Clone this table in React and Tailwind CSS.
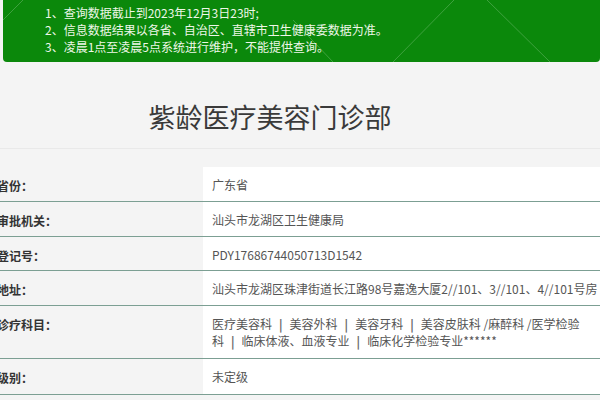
const notices = [
  "1、查询数据截止到2023年12月3日23时;",
  "2、信息数据结果以各省、自治区、直辖市卫生健康委数据为准。",
  "3、凌晨1点至凌晨5点系统进行维护，不能提供查询。",
];

const Sep = () => <b className="px-[7px] text-[#666]">|</b>;

const rows = [
  { label: "省份：", value: "广东省", h: "h-[35px]" },
  { label: "审批机关：", value: "汕头市龙湖区卫生健康局", h: "h-[35px]" },
  { label: "登记号：", value: "PDY17686744050713D1542", h: "h-[34px]" },
  { label: "地址：", value: "汕头市龙湖区珠津街道长江路98号嘉逸大厦2//101、3//101、4//101号房", h: "h-[35px]" },
  {
    label: "诊疗科目：",
    value: (
      <>
        医疗美容科<Sep />美容外科<Sep />美容牙科<Sep />美容皮肤科 /麻醉科 /医学检验
        <br />
        科<Sep />临床体液、血液专业<Sep />临床化学检验专业******
      </>
    ),
    h: "h-[53px]",
  },
  { label: "级别：", value: "未定级", h: "h-[36px]" },
];

function Banner() {
  return (
    <div className="relative ml-[3px] h-[62px] overflow-hidden rounded-b-[4px] bg-[#0b880b] pl-[42px] pt-[4px] text-[12px] leading-[17px] text-[#eef7e8]">
      <svg className="absolute inset-0 h-full w-full" viewBox="0 0 597 62" preserveAspectRatio="none">
        <g stroke="#7ec27e" strokeWidth="1" opacity="0.45" fill="none">
          <line x1="0" y1="20" x2="20" y2="0" />
          <line x1="330" y1="62" x2="290" y2="20" />
          <line x1="390" y1="62" x2="451" y2="0" />
          <line x1="484" y1="0" x2="547" y2="62" />
        </g>
      </svg>
      {notices.map((n) => (
        <p key={n} className="relative whitespace-nowrap">{n}</p>
      ))}
    </div>
  );
}

export default function App() {
  return (
    <div className="h-[400px] w-[600px] overflow-hidden bg-[#f4f4f4] font-['Noto_Sans_CJK_SC',sans-serif]">
      <Banner />
      <div className="border-b border-[#e9e9e9] pb-[13px] pt-[37px] pr-[60px] text-center text-[27px] leading-[36px] text-[#3a3a3a]">
        紫龄医疗美容门诊部
      </div>
      <div className="mt-[18px] grid grid-cols-[203px_1fr] text-[12px] leading-[17px]">
        {rows.map((r) => (
          <div key={r.label} className={`col-span-2 grid grid-cols-subgrid border-b border-[#7c9f93] ${r.h}`}>
            <div className="ml-[-3px] pt-[10px] font-bold text-[#333]">{r.label}</div>
            <div className="whitespace-nowrap bg-white pl-[9px] pt-[9px] text-[#555]">{r.value}</div>
          </div>
        ))}
      </div>
    </div>
  );
}
